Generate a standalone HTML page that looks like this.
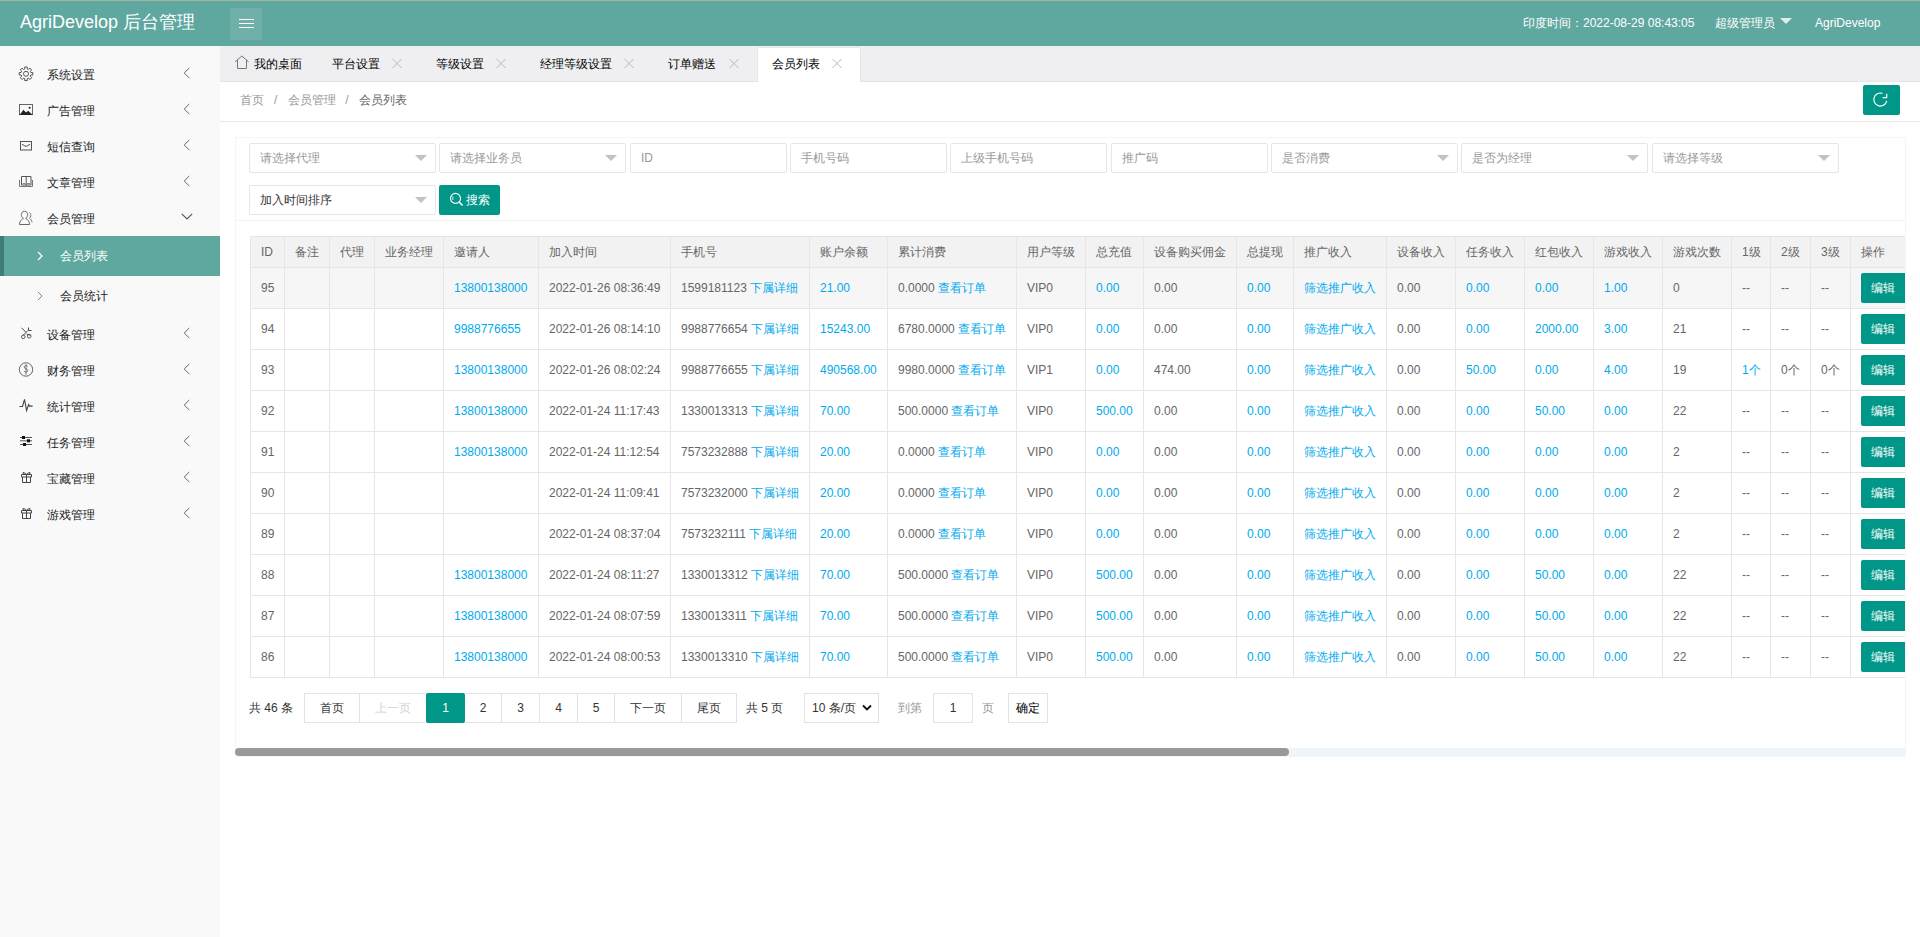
<!DOCTYPE html>
<html><head><meta charset="utf-8">
<style>
*{box-sizing:border-box;margin:0;padding:0}
html,body{width:1920px;height:937px;overflow:hidden;background:#fff;font-family:"Liberation Sans",sans-serif;font-size:12px;color:#666}
.abs{position:absolute}
.nw{white-space:nowrap}
#hdr{position:absolute;left:0;top:0;width:1920px;height:46px;background:#5fa8a0;border-top:1px solid #a4b5a0}
#logo{position:absolute;left:20px;top:10px;font-size:18px;color:#fff;line-height:22px;white-space:nowrap}
#burger{position:absolute;left:230px;top:7px;width:32px;height:32px;border-radius:3px;background:rgba(255,255,255,.1)}
#burger i{position:absolute;left:9px;width:15px;height:1px;background:#fff}
.hr{position:absolute;top:14px;color:#fff;font-size:12px;line-height:16px;white-space:nowrap}
#side{position:absolute;left:0;top:46px;width:220px;height:891px;background:#f9f9f9}
.st{position:absolute;line-height:16px;color:#222;white-space:nowrap}
#tabs{position:absolute;left:220px;top:46px;width:1700px;height:36px;background:#efeff1;border-bottom:1px solid #e4e4e4}
.tt{position:absolute;line-height:16px;color:#000;white-space:nowrap}
#crumb{position:absolute;left:220px;top:82px;width:1700px;height:40px;border-bottom:1px solid #e8e8e8;background:#fff}
.sel{position:absolute;height:30px;border:1px solid #e6e6e6;border-radius:2px;background:#fff;line-height:28px;padding-left:10px;color:#999;white-space:nowrap}
.sel.dd:after{content:"";position:absolute;right:8px;top:11px;border:6px solid transparent;border-top-color:#c2c2c2;border-bottom:0}
#card{position:absolute;left:235px;top:137px;width:1671px;height:620px;border:1px solid #f5f5f5}
#tblwrap{position:absolute;left:250px;top:236px;width:1655px;height:442px;overflow:hidden}
table{border-collapse:separate;border-spacing:0;table-layout:fixed;border-left:1px solid #e6e6e6;border-top:1px solid #e6e6e6}
td,th{border-right:1px solid #e6e6e6;border-bottom:1px solid #e6e6e6;padding:0 0 0 10px;text-align:left;font-weight:normal;white-space:nowrap;overflow:hidden;color:#666}
th{height:31px;background:#f2f2f2}
td{height:41px}
tr.hov td{background:#f6f6f6}
a{color:#01aaed}
.eb{display:inline-block;height:30px;line-height:30px;padding:0 16px 0 10px;background:#009688;color:#fff;border-radius:2px}
.pg{position:absolute;top:693px;height:30px;line-height:28px;border:1px solid #e2e2e2;text-align:center;color:#333;background:#fff}
</style></head><body>

<div id="hdr"><div id="logo">AgriDevelop 后台管理</div>
<div id="burger"><i style="top:11px"></i><i style="top:15px"></i><i style="top:19px"></i></div>
<div class="hr" style="left:1523px">印度时间：2022-08-29 08:43:05</div>
<div class="hr" style="left:1715px">超级管理员</div>
<div class="abs" style="left:1780px;top:17px;border:6px solid transparent;border-top:6px solid rgba(255,255,255,.8);border-bottom:0"></div>
<div class="hr" style="left:1815px">AgriDevelop</div></div>
<div id="side"></div>
<svg class="abs" style="left:14px;top:61px" width="26" height="26" viewBox="0 0 26 26" fill="none" stroke="#555" stroke-width="1"><path d="M10.79 7.95 L10.68 6.03 L13.32 6.03 L13.21 7.95 L14.58 8.51 L15.86 7.08 L17.72 8.94 L16.29 10.22 L16.85 11.59 L18.77 11.48 L18.77 14.12 L16.85 14.01 L16.29 15.38 L17.72 16.66 L15.86 18.52 L14.58 17.09 L13.21 17.65 L13.32 19.57 L10.68 19.57 L10.79 17.65 L9.42 17.09 L8.14 18.52 L6.28 16.66 L7.71 15.38 L7.15 14.01 L5.23 14.12 L5.23 11.48 L7.15 11.59 L7.71 10.22 L6.28 8.94 L8.14 7.08 L9.42 8.51z" stroke="#555"/><circle cx="12" cy="12.8" r="2.5" stroke="#555"/></svg>
<div class="st" style="left:47px;top:67px">系统设置</div>
<svg class="abs" style="left:183px;top:67px" width="8" height="12" viewBox="0 0 8 12" fill="none" stroke="#666" stroke-width="1"><path d="M6.3 1 L1.2 6 L6.3 11"/></svg>
<svg class="abs" style="left:14px;top:97px" width="26" height="26" viewBox="0 0 26 26" fill="none" stroke="#555" stroke-width="1"><rect x="5.5" y="7.5" width="13" height="10" stroke="#666"/><path d="M6 17.5 L9.4 12.8 L12 15.6 L14.2 13.8 L18 17.5z" fill="#222" stroke="none"/><circle cx="15.6" cy="10.8" r="1" fill="#222" stroke="none"/><path d="M5.5 17.5h13" stroke="#222"/></svg>
<div class="st" style="left:47px;top:103px">广告管理</div>
<svg class="abs" style="left:183px;top:103px" width="8" height="12" viewBox="0 0 8 12" fill="none" stroke="#666" stroke-width="1"><path d="M6.3 1 L1.2 6 L6.3 11"/></svg>
<svg class="abs" style="left:14px;top:133px" width="26" height="26" viewBox="0 0 26 26" fill="none" stroke="#555" stroke-width="1"><rect x="6.5" y="8.5" width="11" height="8.5" stroke="#555"/><path d="M8 11.3 L12 13.5 L16 11.3" stroke="#555"/></svg>
<div class="st" style="left:47px;top:139px">短信查询</div>
<svg class="abs" style="left:183px;top:139px" width="8" height="12" viewBox="0 0 8 12" fill="none" stroke="#666" stroke-width="1"><path d="M6.3 1 L1.2 6 L6.3 11"/></svg>
<svg class="abs" style="left:14px;top:169px" width="26" height="26" viewBox="0 0 26 26" fill="none" stroke="#555" stroke-width="1"><path d="M5.5 11v6.5h13V11" stroke="#777"/><path d="M7.5 7.5h9.5v8.5H7.5zM12.2 7.5v9" stroke="#555"/><path d="M8.5 14.5h3M13 14.5h3" stroke="#888"/></svg>
<div class="st" style="left:47px;top:175px">文章管理</div>
<svg class="abs" style="left:183px;top:175px" width="8" height="12" viewBox="0 0 8 12" fill="none" stroke="#666" stroke-width="1"><path d="M6.3 1 L1.2 6 L6.3 11"/></svg>
<svg class="abs" style="left:14px;top:205px" width="26" height="26" viewBox="0 0 26 26" fill="none" stroke="#555" stroke-width="1"><path d="M9.5 13.5c-1.5-1-2.2-2.5-2.2-4s1.2-3.2 3.2-3.2 3.2 1.5 3.2 3.2-.7 3-2.2 4" stroke="#666"/><path d="M5.5 19.5c0-3 1.5-5 3.8-6M11.8 13.5c2.2 1 3.7 3 3.7 6M5.5 19.5h10" stroke="#666"/><path d="M15.5 7.5c1 .8 1.3 1.8 1.3 3s-.4 2.2-1.2 2.8c1.5 1 2.4 2.5 2.4 4" stroke="#777"/></svg>
<div class="st" style="left:47px;top:211px">会员管理</div>
<svg class="abs" style="left:181px;top:213px" width="12" height="7" viewBox="0 0 12 7" fill="none" stroke="#555" stroke-width="1.1"><path d="M.8 .8 L6 6 L11.2 .8"/></svg>
<svg class="abs" style="left:14px;top:321px" width="26" height="26" viewBox="0 0 26 26" fill="none" stroke="#555" stroke-width="1"><path d="M7.5 6.8l4.2 4.2M14.5 6.5v3h3M13.8 9.8l-5 4.8M12.5 13l4 1.2" stroke="#444"/><circle cx="9.3" cy="15.8" r="1.8" stroke="#555"/><circle cx="15.2" cy="15.2" r="1.8" stroke="#555"/></svg>
<div class="st" style="left:47px;top:327px">设备管理</div>
<svg class="abs" style="left:183px;top:327px" width="8" height="12" viewBox="0 0 8 12" fill="none" stroke="#666" stroke-width="1"><path d="M6.3 1 L1.2 6 L6.3 11"/></svg>
<svg class="abs" style="left:14px;top:357px" width="26" height="26" viewBox="0 0 26 26" fill="none" stroke="#555" stroke-width="1"><circle cx="12" cy="12.5" r="6.7" stroke="#666"/><path d="M13.6 9.6c-.4-.7-1-1-1.7-1-1 0-1.7.6-1.7 1.5 0 2 3.6 1.3 3.6 3.5 0 .9-.8 1.6-1.8 1.6-.8 0-1.5-.4-1.9-1.1M12 7.3v10.4" stroke="#666" stroke-width=".9"/></svg>
<div class="st" style="left:47px;top:363px">财务管理</div>
<svg class="abs" style="left:183px;top:363px" width="8" height="12" viewBox="0 0 8 12" fill="none" stroke="#666" stroke-width="1"><path d="M6.3 1 L1.2 6 L6.3 11"/></svg>
<svg class="abs" style="left:14px;top:393px" width="26" height="26" viewBox="0 0 26 26" fill="none" stroke="#555" stroke-width="1"><path d="M5.5 13.5h3l2-7.2 2.1 11.2 2-6 1 1.6h3" stroke="#444" stroke-width="1.1"/></svg>
<div class="st" style="left:47px;top:399px">统计管理</div>
<svg class="abs" style="left:183px;top:399px" width="8" height="12" viewBox="0 0 8 12" fill="none" stroke="#666" stroke-width="1"><path d="M6.3 1 L1.2 6 L6.3 11"/></svg>
<svg class="abs" style="left:14px;top:429px" width="26" height="26" viewBox="0 0 26 26" fill="none" stroke="#555" stroke-width="1"><path d="M6 8.5h12M6 11.8h12M6 15.5h12" stroke="#555"/><rect x="8" y="7" width="3" height="3" fill="#111" stroke="none"/><rect x="13" y="10.3" width="3" height="3" fill="#111" stroke="none"/><rect x="9" y="14" width="3" height="3" fill="#111" stroke="none"/></svg>
<div class="st" style="left:47px;top:435px">任务管理</div>
<svg class="abs" style="left:183px;top:435px" width="8" height="12" viewBox="0 0 8 12" fill="none" stroke="#666" stroke-width="1"><path d="M6.3 1 L1.2 6 L6.3 11"/></svg>
<svg class="abs" style="left:14px;top:465px" width="26" height="26" viewBox="0 0 26 26" fill="none" stroke="#555" stroke-width="1"><path d="M7.5 9.5h10v2.5h-10zM8.5 12v5.5h8V12M12.5 9.5v8M9.5 9.5l-.5-2 2.5.8 1 1.2 1-1.2 2.5-.8-.5 2" stroke="#444"/></svg>
<div class="st" style="left:47px;top:471px">宝藏管理</div>
<svg class="abs" style="left:183px;top:471px" width="8" height="12" viewBox="0 0 8 12" fill="none" stroke="#666" stroke-width="1"><path d="M6.3 1 L1.2 6 L6.3 11"/></svg>
<svg class="abs" style="left:14px;top:501px" width="26" height="26" viewBox="0 0 26 26" fill="none" stroke="#555" stroke-width="1"><path d="M7.5 9.5h10v2.5h-10zM8.5 12v5.5h8V12M12.5 9.5v8M9.5 9.5l-.5-2 2.5.8 1 1.2 1-1.2 2.5-.8-.5 2" stroke="#444"/></svg>
<div class="st" style="left:47px;top:507px">游戏管理</div>
<svg class="abs" style="left:183px;top:507px" width="8" height="12" viewBox="0 0 8 12" fill="none" stroke="#666" stroke-width="1"><path d="M6.3 1 L1.2 6 L6.3 11"/></svg>
<div class="abs" style="left:0;top:236px;width:220px;height:40px;background:#5fa8a0"></div>
<div class="abs" style="left:0;top:236px;width:4px;height:40px;background:#3d7d75"></div>
<svg class="abs" style="left:37px;top:251px" width="6" height="10" viewBox="0 0 6 10" fill="none" stroke="#fff" stroke-width="1.2"><path d="M1 1 L5 5 L1 9"/></svg>
<div class="st" style="left:60px;top:248px;color:#fff">会员列表</div>
<svg class="abs" style="left:37px;top:291px" width="6" height="10" viewBox="0 0 6 10" fill="none" stroke="#888" stroke-width="1"><path d="M1 1 L5 5 L1 9"/></svg>
<div class="st" style="left:60px;top:288px">会员统计</div>
<div id="tabs"></div>
<div class="abs" style="left:757px;top:47px;width:104px;height:35px;background:#fff;border:1px solid #e6e6e6;border-bottom:0;border-radius:2px 2px 0 0"></div>
<svg class="abs" style="left:234px;top:55px" width="16" height="15" viewBox="0 0 16 15" fill="none" stroke="#777" stroke-width="1"><path d="M1.2 6.8 L7.8 1 L14.6 6.8"/><path d="M3.5 5 V13.5 H12.5 V5"/></svg>
<div class="tt" style="left:254px;top:56px">我的桌面</div>
<div class="tt" style="left:332px;top:56px">平台设置</div>
<svg class="abs" style="left:392px;top:58px" width="10" height="11" viewBox="0 0 10 11" stroke="#b8b8b8" stroke-width="1"><path d="M.5 1 L9.5 10 M9.5 1 L.5 10"/></svg>
<div class="tt" style="left:436px;top:56px">等级设置</div>
<svg class="abs" style="left:496px;top:58px" width="10" height="11" viewBox="0 0 10 11" stroke="#b8b8b8" stroke-width="1"><path d="M.5 1 L9.5 10 M9.5 1 L.5 10"/></svg>
<div class="tt" style="left:540px;top:56px">经理等级设置</div>
<svg class="abs" style="left:624px;top:58px" width="10" height="11" viewBox="0 0 10 11" stroke="#b8b8b8" stroke-width="1"><path d="M.5 1 L9.5 10 M9.5 1 L.5 10"/></svg>
<div class="tt" style="left:668px;top:56px">订单赠送</div>
<svg class="abs" style="left:729px;top:58px" width="10" height="11" viewBox="0 0 10 11" stroke="#b8b8b8" stroke-width="1"><path d="M.5 1 L9.5 10 M9.5 1 L.5 10"/></svg>
<div class="tt" style="left:772px;top:56px">会员列表</div>
<svg class="abs" style="left:832px;top:58px" width="10" height="11" viewBox="0 0 10 11" stroke="#b8b8b8" stroke-width="1"><path d="M.5 1 L9.5 10 M9.5 1 L.5 10"/></svg>
<div id="crumb"></div>
<div class="abs nw" style="left:240px;top:92px;line-height:16px;color:#999">首页<span style="margin:0 11px 0 10px">/</span>会员管理<span style="margin:0 10px 0 9px">/</span><span style="color:#666">会员列表</span></div>
<div class="abs" style="left:1863px;top:85px;width:37px;height:30px;background:#009688;border-radius:2px"></div>
<svg class="abs" style="left:1872px;top:91px" width="18" height="18" viewBox="0 0 18 18" fill="none" stroke="#fff" stroke-width="1.2"><path d="M14.7 9.8 A6.5 6.5 0 1 1 10.4 2.35"/><path d="M14.7 2.8 V6.6 H10.6"/></svg>
<div id="card"></div>
<div class="abs" style="left:236px;top:220px;width:1669px;height:1px;background:#f3f3f3"></div>
<div class="sel dd" style="left:249px;top:143px;width:187px">请选择代理</div>
<div class="sel dd" style="left:439px;top:143px;width:187px">请选择业务员</div>
<div class="sel" style="left:630px;top:143px;width:157px">ID</div>
<div class="sel" style="left:790px;top:143px;width:157px">手机号码</div>
<div class="sel" style="left:950px;top:143px;width:157px">上级手机号码</div>
<div class="sel" style="left:1111px;top:143px;width:157px">推广码</div>
<div class="sel dd" style="left:1271px;top:143px;width:187px">是否消费</div>
<div class="sel dd" style="left:1461px;top:143px;width:187px">是否为经理</div>
<div class="sel dd" style="left:1652px;top:143px;width:187px">请选择等级</div>
<div class="sel dd" style="left:249px;top:185px;width:187px;color:#333">加入时间排序</div>
<div class="abs nw" style="left:439px;top:185px;width:61px;height:30px;background:#009688;border-radius:2px;color:#fff;line-height:30px;padding-left:27px">搜索</div>
<svg class="abs" style="left:449px;top:192px" width="16" height="16" viewBox="0 0 16 16" fill="none" stroke="#fff" stroke-width="1.1"><circle cx="6.5" cy="6.4" r="5"/><path d="M10.2 10.1 L13.6 13.5" stroke-width="1.6"/><path d="M3.8 4.5 V8" stroke-width=".8"/></svg>
<div id="tblwrap"><table style="width:1671px"><colgroup>
<col style="width:34px">
<col style="width:45px">
<col style="width:45px">
<col style="width:69px">
<col style="width:95px">
<col style="width:132px">
<col style="width:139px">
<col style="width:78px">
<col style="width:129px">
<col style="width:69px">
<col style="width:58px">
<col style="width:93px">
<col style="width:57px">
<col style="width:93px">
<col style="width:69px">
<col style="width:69px">
<col style="width:69px">
<col style="width:69px">
<col style="width:69px">
<col style="width:39px">
<col style="width:40px">
<col style="width:40px">
<col style="width:70px">
</colgroup><tr>
<th>ID</th>
<th>备注</th>
<th>代理</th>
<th>业务经理</th>
<th>邀请人</th>
<th>加入时间</th>
<th>手机号</th>
<th>账户余额</th>
<th>累计消费</th>
<th>用户等级</th>
<th>总充值</th>
<th>设备购买佣金</th>
<th>总提现</th>
<th>推广收入</th>
<th>设备收入</th>
<th>任务收入</th>
<th>红包收入</th>
<th>游戏收入</th>
<th>游戏次数</th>
<th>1级</th>
<th>2级</th>
<th>3级</th>
<th>操作</th>
</tr>
<tr class="hov">
<td>95</td>
<td></td>
<td></td>
<td></td>
<td><a>13800138000</a></td>
<td>2022-01-26 08:36:49</td>
<td>1599181123 <a>下属详细</a></td>
<td><a>21.00</a></td>
<td>0.0000 <a>查看订单</a></td>
<td>VIP0</td>
<td><a>0.00</a></td>
<td>0.00</td>
<td><a>0.00</a></td>
<td><a>筛选推广收入</a></td>
<td>0.00</td>
<td><a>0.00</a></td>
<td><a>0.00</a></td>
<td><a>1.00</a></td>
<td>0</td>
<td>--</td>
<td>--</td>
<td>--</td>
<td><span class="eb">编辑</span></td>
</tr>
<tr>
<td>94</td>
<td></td>
<td></td>
<td></td>
<td><a>9988776655</a></td>
<td>2022-01-26 08:14:10</td>
<td>9988776654 <a>下属详细</a></td>
<td><a>15243.00</a></td>
<td>6780.0000 <a>查看订单</a></td>
<td>VIP0</td>
<td><a>0.00</a></td>
<td>0.00</td>
<td><a>0.00</a></td>
<td><a>筛选推广收入</a></td>
<td>0.00</td>
<td><a>0.00</a></td>
<td><a>2000.00</a></td>
<td><a>3.00</a></td>
<td>21</td>
<td>--</td>
<td>--</td>
<td>--</td>
<td><span class="eb">编辑</span></td>
</tr>
<tr>
<td>93</td>
<td></td>
<td></td>
<td></td>
<td><a>13800138000</a></td>
<td>2022-01-26 08:02:24</td>
<td>9988776655 <a>下属详细</a></td>
<td><a>490568.00</a></td>
<td>9980.0000 <a>查看订单</a></td>
<td>VIP1</td>
<td><a>0.00</a></td>
<td>474.00</td>
<td><a>0.00</a></td>
<td><a>筛选推广收入</a></td>
<td>0.00</td>
<td><a>50.00</a></td>
<td><a>0.00</a></td>
<td><a>4.00</a></td>
<td>19</td>
<td><a>1个</a></td>
<td>0个</td>
<td>0个</td>
<td><span class="eb">编辑</span></td>
</tr>
<tr>
<td>92</td>
<td></td>
<td></td>
<td></td>
<td><a>13800138000</a></td>
<td>2022-01-24 11:17:43</td>
<td>1330013313 <a>下属详细</a></td>
<td><a>70.00</a></td>
<td>500.0000 <a>查看订单</a></td>
<td>VIP0</td>
<td><a>500.00</a></td>
<td>0.00</td>
<td><a>0.00</a></td>
<td><a>筛选推广收入</a></td>
<td>0.00</td>
<td><a>0.00</a></td>
<td><a>50.00</a></td>
<td><a>0.00</a></td>
<td>22</td>
<td>--</td>
<td>--</td>
<td>--</td>
<td><span class="eb">编辑</span></td>
</tr>
<tr>
<td>91</td>
<td></td>
<td></td>
<td></td>
<td><a>13800138000</a></td>
<td>2022-01-24 11:12:54</td>
<td>7573232888 <a>下属详细</a></td>
<td><a>20.00</a></td>
<td>0.0000 <a>查看订单</a></td>
<td>VIP0</td>
<td><a>0.00</a></td>
<td>0.00</td>
<td><a>0.00</a></td>
<td><a>筛选推广收入</a></td>
<td>0.00</td>
<td><a>0.00</a></td>
<td><a>0.00</a></td>
<td><a>0.00</a></td>
<td>2</td>
<td>--</td>
<td>--</td>
<td>--</td>
<td><span class="eb">编辑</span></td>
</tr>
<tr>
<td>90</td>
<td></td>
<td></td>
<td></td>
<td></td>
<td>2022-01-24 11:09:41</td>
<td>7573232000 <a>下属详细</a></td>
<td><a>20.00</a></td>
<td>0.0000 <a>查看订单</a></td>
<td>VIP0</td>
<td><a>0.00</a></td>
<td>0.00</td>
<td><a>0.00</a></td>
<td><a>筛选推广收入</a></td>
<td>0.00</td>
<td><a>0.00</a></td>
<td><a>0.00</a></td>
<td><a>0.00</a></td>
<td>2</td>
<td>--</td>
<td>--</td>
<td>--</td>
<td><span class="eb">编辑</span></td>
</tr>
<tr>
<td>89</td>
<td></td>
<td></td>
<td></td>
<td></td>
<td>2022-01-24 08:37:04</td>
<td>7573232111 <a>下属详细</a></td>
<td><a>20.00</a></td>
<td>0.0000 <a>查看订单</a></td>
<td>VIP0</td>
<td><a>0.00</a></td>
<td>0.00</td>
<td><a>0.00</a></td>
<td><a>筛选推广收入</a></td>
<td>0.00</td>
<td><a>0.00</a></td>
<td><a>0.00</a></td>
<td><a>0.00</a></td>
<td>2</td>
<td>--</td>
<td>--</td>
<td>--</td>
<td><span class="eb">编辑</span></td>
</tr>
<tr>
<td>88</td>
<td></td>
<td></td>
<td></td>
<td><a>13800138000</a></td>
<td>2022-01-24 08:11:27</td>
<td>1330013312 <a>下属详细</a></td>
<td><a>70.00</a></td>
<td>500.0000 <a>查看订单</a></td>
<td>VIP0</td>
<td><a>500.00</a></td>
<td>0.00</td>
<td><a>0.00</a></td>
<td><a>筛选推广收入</a></td>
<td>0.00</td>
<td><a>0.00</a></td>
<td><a>50.00</a></td>
<td><a>0.00</a></td>
<td>22</td>
<td>--</td>
<td>--</td>
<td>--</td>
<td><span class="eb">编辑</span></td>
</tr>
<tr>
<td>87</td>
<td></td>
<td></td>
<td></td>
<td><a>13800138000</a></td>
<td>2022-01-24 08:07:59</td>
<td>1330013311 <a>下属详细</a></td>
<td><a>70.00</a></td>
<td>500.0000 <a>查看订单</a></td>
<td>VIP0</td>
<td><a>500.00</a></td>
<td>0.00</td>
<td><a>0.00</a></td>
<td><a>筛选推广收入</a></td>
<td>0.00</td>
<td><a>0.00</a></td>
<td><a>50.00</a></td>
<td><a>0.00</a></td>
<td>22</td>
<td>--</td>
<td>--</td>
<td>--</td>
<td><span class="eb">编辑</span></td>
</tr>
<tr>
<td>86</td>
<td></td>
<td></td>
<td></td>
<td><a>13800138000</a></td>
<td>2022-01-24 08:00:53</td>
<td>1330013310 <a>下属详细</a></td>
<td><a>70.00</a></td>
<td>500.0000 <a>查看订单</a></td>
<td>VIP0</td>
<td><a>500.00</a></td>
<td>0.00</td>
<td><a>0.00</a></td>
<td><a>筛选推广收入</a></td>
<td>0.00</td>
<td><a>0.00</a></td>
<td><a>50.00</a></td>
<td><a>0.00</a></td>
<td>22</td>
<td>--</td>
<td>--</td>
<td>--</td>
<td><span class="eb">编辑</span></td>
</tr>
</table></div>
<div class="abs nw" style="left:249px;top:700px;line-height:16px;color:#333">共 46 条</div>
<div class="pg" style="left:304px;width:56px;color:#333;">首页</div>
<div class="pg" style="left:359px;width:68px;color:#d2d2d2;">上一页</div>
<div class="pg" style="left:464px;width:38px;color:#333;">2</div>
<div class="pg" style="left:501px;width:39px;color:#333;">3</div>
<div class="pg" style="left:539px;width:39px;color:#333;">4</div>
<div class="pg" style="left:577px;width:38px;color:#333;">5</div>
<div class="pg" style="left:614px;width:68px;color:#333;">下一页</div>
<div class="pg" style="left:681px;width:56px;color:#333;">尾页</div>
<div class="pg" style="left:426px;width:39px;color:#fff;background:#009688;border-color:#009688;border-radius:2px;">1</div>
<div class="abs nw" style="left:746px;top:700px;line-height:16px;color:#333">共 5 页</div>
<div class="pg" style="left:804px;width:75px;text-align:left;padding-left:7px">10 条/页</div>
<svg class="abs" style="left:862px;top:704px" width="10" height="8" viewBox="0 0 10 8" fill="none" stroke="#111" stroke-width="1.8"><path d="M1 1.5 L5 5.5 L9 1.5"/></svg>
<div class="abs nw" style="left:898px;top:700px;line-height:16px;color:#999">到第</div>
<div class="pg" style="left:933px;width:40px">1</div>
<div class="abs nw" style="left:982px;top:700px;line-height:16px;color:#999">页</div>
<div class="pg" style="left:1008px;width:40px;color:#000">确定</div>
<div class="abs" style="left:235px;top:748px;width:1670px;height:8px;background:#eef6f9"></div>
<div class="abs" style="left:235px;top:748px;width:1054px;height:8px;background:#999;border-radius:4px"></div>
</body></html>
